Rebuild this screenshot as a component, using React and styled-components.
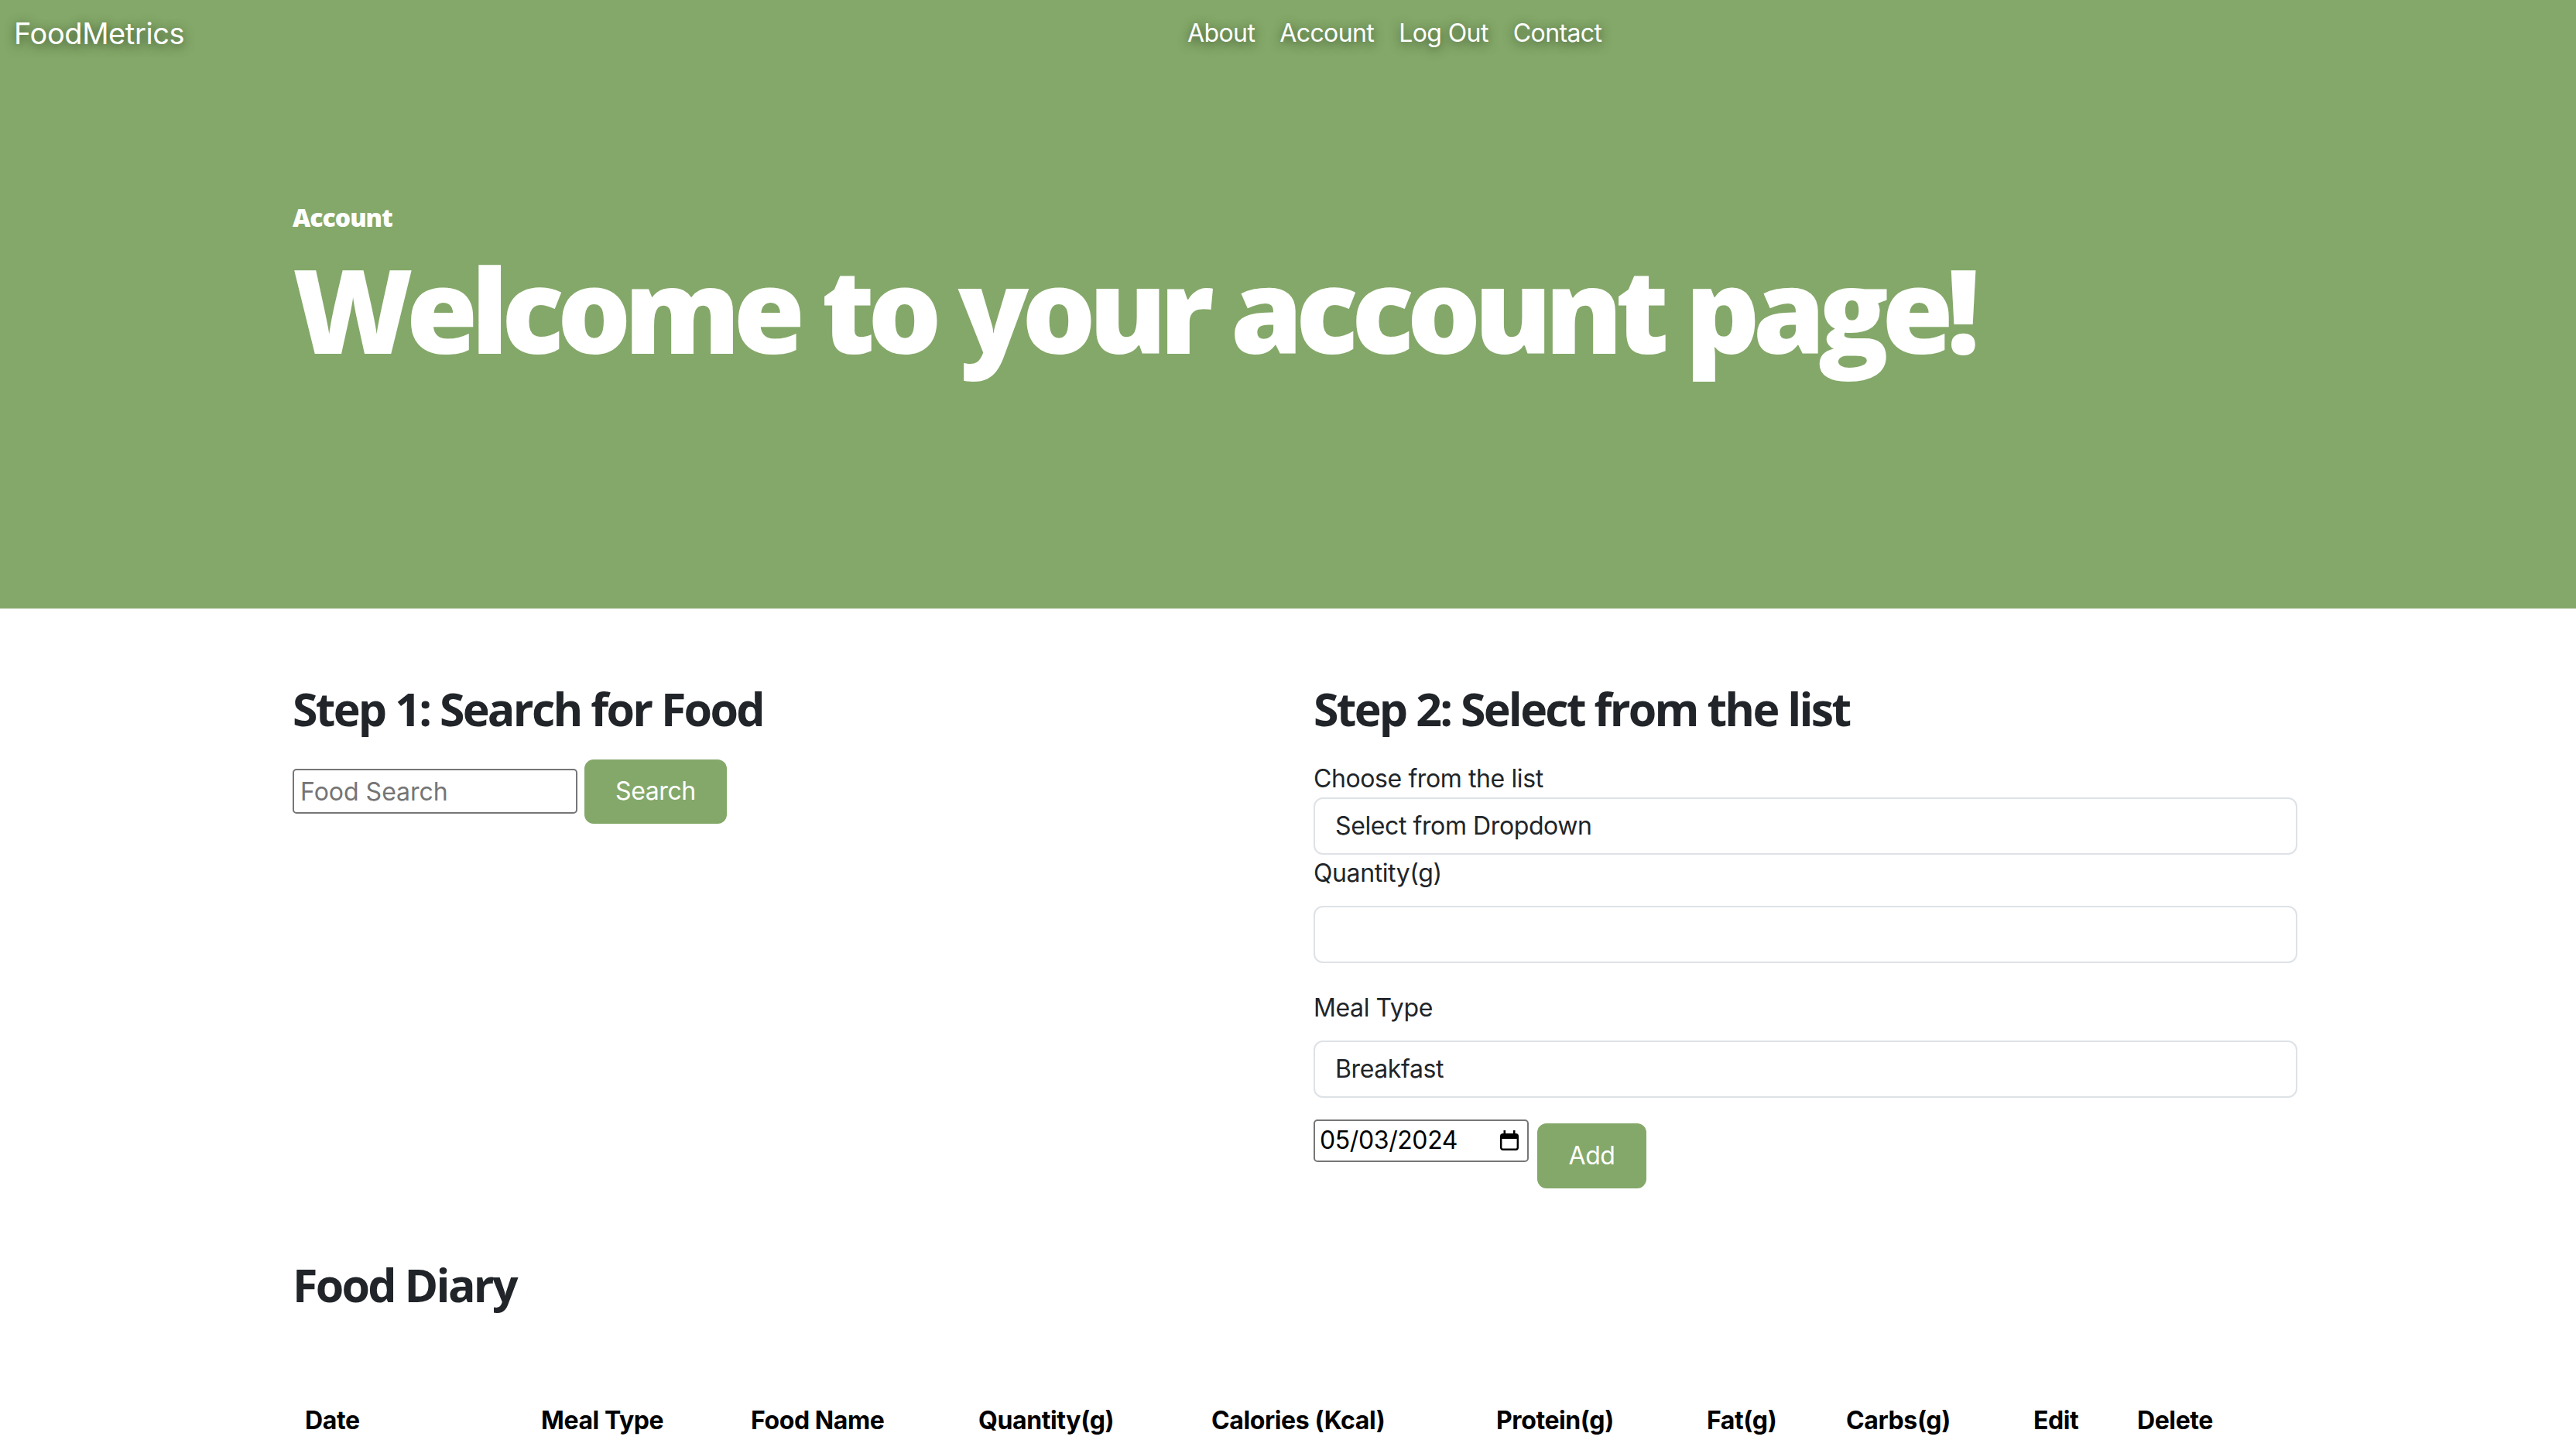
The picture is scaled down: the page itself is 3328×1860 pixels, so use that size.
import React from 'react';
import styled, { createGlobalStyle } from 'styled-components';

const GREEN = '#84a869';
const INK = '#212529';

const GlobalStyle = createGlobalStyle`
  html, body {
    margin: 0;
    padding: 0;
    background: #fff;
  }
  body {
    font-family: Inter, "Noto Sans", sans-serif;
    font-size: 32px;
    line-height: 1.5;
    color: ${INK};
    letter-spacing: -0.4px;
  }
  * {
    box-sizing: border-box;
  }
`;

const Hero = styled.header`
  background: ${GREEN};
  height: 786px;
  color: #fff;
`;

const Navbar = styled.nav`
  display: flex;
  align-items: center;
  height: 86px;
`;

const Brand = styled.a`
  width: 1518px;
  padding-left: 18px;
  font-size: 38px;
  color: #fff;
  text-decoration: none;
  text-shadow: 0 3px 14px rgba(30, 50, 20, 0.75);
`;

const NavLinks = styled.ul`
  display: flex;
  list-style: none;
  margin: 0;
  padding: 0;
`;

const NavLink = styled.a`
  display: block;
  padding: 0 16px;
  font-size: 32px;
  letter-spacing: -0.6px;
  color: #fff;
  text-decoration: none;
  text-shadow: 0 3px 14px rgba(30, 50, 20, 0.75);
`;

const HeroBody = styled.div`
  padding: 176px 0 0 378px;
`;

const Kicker = styled.div`
  font-family: "Open Sans", sans-serif;
  font-weight: 800;
  font-size: 32px;
  line-height: 1.2;
  letter-spacing: -1px;
`;

const Headline = styled.h1`
  margin: 9px 0 0;
  font-family: "Open Sans", sans-serif;
  font-weight: 800;
  font-size: 150px;
  line-height: 1.2;
  letter-spacing: -9px;
`;

const Main = styled.main`
  width: 2590px;
  margin-left: 378px;
  padding-top: 91px;
`;

const Row = styled.div`
  display: grid;
  grid-template-columns: 1271px 1271px;
  column-gap: 48px;
`;

const Col = styled.section``;

const Heading = styled.h2`
  margin: 0;
  font-family: "Open Sans", sans-serif;
  font-weight: 700;
  font-size: 59px;
  line-height: 1.3;
  letter-spacing: -2.7px;
  color: ${INK};
`;

const SearchForm = styled.form`
  display: flex;
  align-items: center;
  gap: 9px;
  margin-top: 27px;
`;

const TextInput = styled.input`
  width: 368px;
  height: 58px;
  padding: 0 8px;
  border: 2px solid #767676;
  border-radius: 5px;
  font: inherit;
  font-size: 32px;
  color: ${INK};
  &::placeholder {
    color: #757575;
  }
`;

const Button = styled.button`
  width: ${(p) => p.$w}px;
  height: ${(p) => p.$h}px;
  margin-top: ${(p) => p.$top || 0}px;
  border: none;
  border-radius: 12px;
  background: ${GREEN};
  color: #fff;
  font: inherit;
  font-size: 32px;
  letter-spacing: -0.4px;
`;

const Field = styled.div`
  margin-top: ${(p) => p.$mt || 0}px;
  margin-bottom: ${(p) => p.$mb || 0}px;
`;

const Label = styled.label`
  display: block;
  margin-bottom: ${(p) => p.$mb || 0}px;
`;

const Box = styled.div`
  display: flex;
  align-items: center;
  height: 74px;
  padding: 0 26px;
  border: 2px solid #dee2e6;
  border-radius: 12px;
  color: ${INK};
`;

const DateRow = styled.div`
  display: flex;
  align-items: flex-start;
  gap: 11px;
  margin-top: 28px;
`;

const DateBox = styled.div`
  display: flex;
  align-items: center;
  justify-content: space-between;
  width: 278px;
  height: 55px;
  padding: 0 10px 0 6px;
  border: 2px solid #767676;
  border-radius: 5px;
  color: #000;
`;

const DiaryHeading = styled(Heading)`
  margin-top: 86px;
`;

const Table = styled.table`
  width: 100%;
  margin-top: 98px;
  border-collapse: collapse;
  table-layout: fixed;
`;

const Th = styled.th`
  width: ${(p) => p.$w}px;
  padding: 16px;
  text-align: left;
  font-weight: 700;
  color: #000;
  border-bottom: 2px solid #dee2e6;
`;

const CalendarIcon = () => (
  <svg width="26" height="28" viewBox="0 0 26 28">
    <path d="M4 6h18a2 2 0 0 1 2 2v4H2V8a2 2 0 0 1 2-2z" fill="#000" />
    <rect x="2.2" y="6.2" width="21.6" height="19.6" rx="2.5" fill="none" stroke="#000" strokeWidth="2.4" />
    <rect x="5.5" y="1" width="2.6" height="6" fill="#000" />
    <rect x="17.9" y="1" width="2.6" height="6" fill="#000" />
  </svg>
);

const columns = [
  ['Date', 305],
  ['Meal Type', 271],
  ['Food Name', 294],
  ['Quantity(g)', 301],
  ['Calories (Kcal)', 368],
  ['Protein(g)', 272],
  ['Fat(g)', 180],
  ['Carbs(g)', 242],
  ['Edit', 134],
  ['Delete', 223],
];

const links = ['About', 'Account', 'Log Out', 'Contact'];

export default function App() {
  return (
    <>
      <GlobalStyle />
      <Hero>
        <Navbar>
          <Brand href="#">FoodMetrics</Brand>
          <NavLinks>
            {links.map((l) => (
              <li key={l}>
                <NavLink href="#">{l}</NavLink>
              </li>
            ))}
          </NavLinks>
        </Navbar>
        <HeroBody>
          <Kicker>Account</Kicker>
          <Headline>Welcome to your account page!</Headline>
        </HeroBody>
      </Hero>

      <Main>
        <Row>
          <Col>
            <Heading>Step 1: Search for Food</Heading>
            <SearchForm onSubmit={(e) => e.preventDefault()}>
              <TextInput placeholder="Food Search" />
              <Button $w={184} $h={83}>Search</Button>
            </SearchForm>
          </Col>
          <Col>
            <Heading>Step 2: Select from the list</Heading>
            <Field $mt={28}>
              <Label>Choose from the list</Label>
              <Box>Select from Dropdown</Box>
            </Field>
            <Field $mb={34}>
              <Label $mb={18}>Quantity(g)</Label>
              <Box />
            </Field>
            <Field>
              <Label $mb={18}>Meal Type</Label>
              <Box>Breakfast</Box>
            </Field>
            <DateRow>
              <DateBox>
                <span>05/03/2024</span>
                <CalendarIcon />
              </DateBox>
              <Button $w={141} $h={84} $top={5}>Add</Button>
            </DateRow>
          </Col>
        </Row>

        <DiaryHeading>Food Diary</DiaryHeading>
        <Table>
          <thead>
            <tr>
              {columns.map(([name, w]) => (
                <Th key={name} $w={w}>{name}</Th>
              ))}
            </tr>
          </thead>
        </Table>
      </Main>
    </>
  );
}
